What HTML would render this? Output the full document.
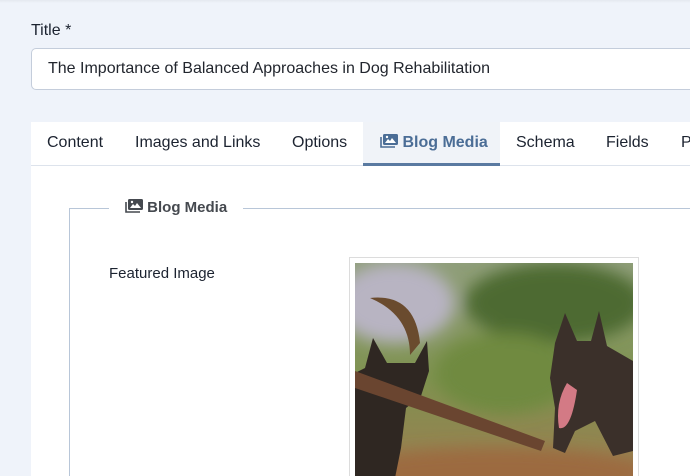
<!DOCTYPE html>
<html><head><style>
*{margin:0;padding:0;box-sizing:border-box}
html,body{width:690px;height:476px;overflow:hidden}
body{background:#eff3fa;font-family:"Liberation Sans",sans-serif;color:#1c2330;position:relative}
.topline{position:absolute;left:0;top:0;width:690px;height:3px;background:linear-gradient(#e4e8ef,#eff3fa)}
.lbl{position:absolute;left:31px;top:22px;font-size:16px;color:#1c2330}
.inp{position:absolute;left:31px;top:48px;width:659px;height:42px;background:#fff;border:1px solid #c4cddb;border-right:none;border-radius:5px 0 0 5px;font-size:16px;padding:11px 0 0 16px;color:#22262e}
.card{position:absolute;left:31px;top:122px;width:659px;height:354px;background:#fff;overflow:hidden}
.tabs{position:absolute;left:0;top:0;width:659px;height:44px;border-bottom:1px solid #dde3ec}
.tab{position:absolute;top:12px;font-size:16px;color:#1c2330}
.act{position:absolute;left:332px;top:0;width:137px;height:44px;background:#f0f3f8;border-bottom:3px solid #5a7aa1}
.act span{position:absolute;left:17px;top:12px;font-size:16px;font-weight:bold;color:#4b6d96;white-space:nowrap}
.fs{position:absolute;left:38px;top:86px;width:640px;height:280px;border:1px solid #b8c6d8}
.leg{position:absolute;left:78px;top:77px;background:#fff;padding:0 16px;font-size:15px;font-weight:bold;color:#45494f;white-space:nowrap}
.fi{position:absolute;left:78px;top:143px;font-size:15px;color:#1c2330}
.frame{position:absolute;left:318px;top:135px;width:290px;height:240px;border:1px solid #dcdcdc;background:#fff}
</style></head><body>
<div class="topline"></div>
<div class="lbl">Title *</div>
<div class="inp">The Importance of Balanced Approaches in Dog Rehabilitation</div>
<div class="card">
 <div class="tabs">
  <div class="tab" style="left:16px">Content</div>
  <div class="tab" style="left:104px">Images and Links</div>
  <div class="tab" style="left:261px">Options</div>
  <div class="act"><span><svg width="18" height="14" viewBox="0 0 18 14" style="vertical-align:-1px"><rect x="3" y="0" width="15" height="11" rx="1.5" fill="#4b6d96"/><path d="M5 9l3-4 2 2 2-3 4 5z" fill="#fff"/><circle cx="7" cy="3" r="1.2" fill="#fff"/><path d="M1 3v10h14" stroke="#4b6d96" stroke-width="1.6" fill="none"/></svg> Blog Media</span></div>
  <div class="tab" style="left:485px">Schema</div>
  <div class="tab" style="left:575px">Fields</div>
  <div class="tab" style="left:650px">P</div>
 </div>
 <div class="fs"></div>
 <div class="leg"><svg width="18" height="14" viewBox="0 0 18 14" style="vertical-align:-1px"><rect x="3" y="0" width="15" height="11" rx="1.5" fill="#45494f"/><path d="M5 9l3-4 2 2 2-3 4 5z" fill="#fff"/><circle cx="7" cy="3" r="1.2" fill="#fff"/><path d="M1 3v10h14" stroke="#45494f" stroke-width="1.6" fill="none"/></svg> Blog Media</div>
 <div class="fi">Featured Image</div>
 <div class="frame">
  <svg width="278" height="230" viewBox="0 0 278 230" style="position:absolute;left:5px;top:5px">
   <defs>
    <linearGradient id="bg" x1="0" y1="0" x2="0" y2="1"><stop offset="0" stop-color="#8f9e7a"/><stop offset="0.5" stop-color="#7f9250"/><stop offset="1" stop-color="#a07a50"/></linearGradient>
    <filter id="b"><feGaussianBlur stdDeviation="8"/></filter>
   </defs>
   <rect width="278" height="230" fill="url(#bg)"/>
   <g filter="url(#b)">
    <ellipse cx="40" cy="40" rx="60" ry="40" fill="#b8b4c2"/>
    <ellipse cx="200" cy="40" rx="90" ry="40" fill="#4e6b33"/>
    <ellipse cx="150" cy="110" rx="70" ry="40" fill="#6f8a3f"/>
    <ellipse cx="140" cy="210" rx="160" ry="25" fill="#9c6a40"/>
   </g>
   <path d="M15 35q45 -5 50 45l-10 12q0-40-40-57z" fill="#6a4b2e"/>
   <path d="M10 105l8-30 14 25h28l12-22 2 30-8 25-15 12-5 40-8 40H0V110z" fill="#2f2722"/>
   <path d="M0 108l190 70-4 10L0 125z" fill="#6a4530"/>
   <path d="M200 80l10-30 12 28h14l8-30 8 35 26 15v90l-20 5-18-35-20 10-10 22-12-5 2-40-5-30z" fill="#3b302a"/>
   <path d="M212 120q-12 20-8 45q12 3 18-38z" fill="#d37a85"/>
  </svg>
 </div>
</div>
</body></html>
